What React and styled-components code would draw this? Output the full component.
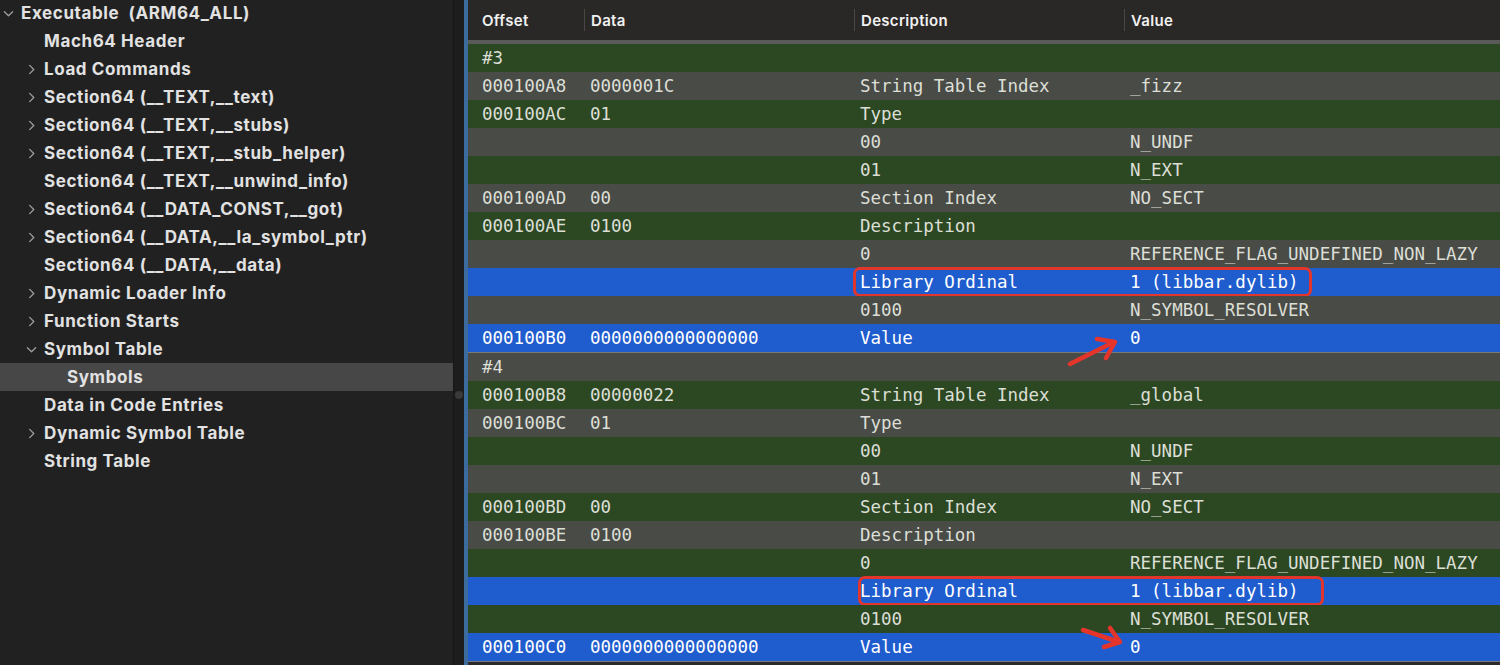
import React from 'react'
import styled, { createGlobalStyle } from 'styled-components'

const GlobalStyle = createGlobalStyle`
  html, body {
    margin: 0;
    padding: 0;
    background: #212121;
    overflow: hidden;
  }
`

const Window = styled.div`
  display: flex;
  width: 1500px;
  height: 665px;
  background: #212121;
  overflow: hidden;
`

const Sidebar = styled.div`
  width: 453px;
  flex-shrink: 0;
  background: #212121;
  border-right: 1px solid #161616;
  margin-top: -1px;
`

const TreeRow = styled.div`
  position: relative;
  display: flex;
  align-items: center;
  height: 28px;
  padding-left: ${props => props.level * 23 + 21}px;
  background: ${props => (props.selected ? '#474747' : 'transparent')};
  color: #e2e2e2;
  font-family: Inter, "Open Sans", sans-serif;
  font-weight: 700;
  font-size: 17px;
  letter-spacing: 0.6px;
  white-space: pre;
`

const Chevron = styled.svg`
  position: absolute;
  left: ${props => props.level * 23 + 3}px;
  top: 9px;
  width: 11px;
  height: 11px;
`

const Splitter = styled.div`
  width: 10px;
  flex-shrink: 0;
  display: flex;
  align-items: center;
  justify-content: center;
  background: #1d1d1d;
  padding-top: 125px;
`

const Knob = styled.div`
  width: 8px;
  height: 8px;
  border-radius: 50%;
  background: #3a3a3a;
`

const Panel = styled.div`
  flex: 1;
  border-left: 4px solid #3c6b9e;
  background: #2b2929;
  display: flex;
  flex-direction: column;
`

const Header = styled.div`
  display: grid;
  grid-template-columns: 116px 270px 270px 1fr;
  height: 40px;
  align-items: center;
  background: #2a2727;
  border-bottom: 4px solid #5a5a5a;
`

const HeadCell = styled.div`
  height: 22px;
  display: flex;
  align-items: center;
  padding-left: ${props => (props.first ? 14 : 6)}px;
  border-left: ${props => (props.first ? 'none' : '1px solid #4a4747')};
  color: #f1f1f1;
  font-family: Inter, "Open Sans", sans-serif;
  font-weight: 600;
  font-size: 15px;
  letter-spacing: 0.3px;
`

const Group = styled.div`
  border-bottom: 1px solid #7a7a7a;
`

const Row = styled.div`
  position: relative;
  display: grid;
  grid-template-columns: 116px 270px 270px 1fr;
  height: 28px;
  align-items: center;
  background: ${props => props.bg};
  color: ${props => (props.selected ? '#ffffff' : '#dcdfd6')};
  font-family: "DejaVu Sans Mono", "Liberation Mono", monospace;
  font-size: 17.5px;
  white-space: pre;
`

const Cell = styled.div`
  padding-left: ${props => (props.first ? 14 : 6)}px;
`

const Callout = styled.div`
  position: absolute;
  left: ${props => props.left}px;
  top: -1px;
  width: ${props => props.width}px;
  height: 30px;
  border: 3px solid #e2362c;
  border-radius: 7px;
  box-sizing: border-box;
  pointer-events: none;
`

const Arrow = styled.svg`
  position: absolute;
  z-index: 2;
  left: 590px;
  top: ${props => props.top}px;
  width: 80px;
  height: 60px;
  overflow: visible;
  pointer-events: none;
`

const GREEN = '#2c4823'
const GRAY = '#494b47'
const BLUE = '#1f5ccd'
const RED = '#e5352b'

const tree = [
  { label: 'Executable  (ARM64_ALL)', level: 0, chevron: 'down' },
  { label: 'Mach64 Header', level: 1 },
  { label: 'Load Commands', level: 1, chevron: 'right' },
  { label: 'Section64 (__TEXT,__text)', level: 1, chevron: 'right' },
  { label: 'Section64 (__TEXT,__stubs)', level: 1, chevron: 'right' },
  { label: 'Section64 (__TEXT,__stub_helper)', level: 1, chevron: 'right' },
  { label: 'Section64 (__TEXT,__unwind_info)', level: 1 },
  { label: 'Section64 (__DATA_CONST,__got)', level: 1, chevron: 'right' },
  { label: 'Section64 (__DATA,__la_symbol_ptr)', level: 1, chevron: 'right' },
  { label: 'Section64 (__DATA,__data)', level: 1 },
  { label: 'Dynamic Loader Info', level: 1, chevron: 'right' },
  { label: 'Function Starts', level: 1, chevron: 'right' },
  { label: 'Symbol Table', level: 1, chevron: 'down' },
  { label: 'Symbols', level: 2, selected: true },
  { label: 'Data in Code Entries', level: 1 },
  { label: 'Dynamic Symbol Table', level: 1, chevron: 'right' },
  { label: 'String Table', level: 1 },
]

const makeGroup = (n, o, idx, name) => [
  { cells: [`#${n}`, '', '', ''] },
  { cells: [o[0], idx, 'String Table Index', name] },
  { cells: [o[1], '01', 'Type', ''] },
  { cells: ['', '', '00', 'N_UNDF'] },
  { cells: ['', '', '01', 'N_EXT'] },
  { cells: [o[2], '00', 'Section Index', 'NO_SECT'] },
  { cells: [o[3], '0100', 'Description', ''] },
  { cells: ['', '', '0', 'REFERENCE_FLAG_UNDEFINED_NON_LAZY'] },
  { cells: ['', '', 'Library Ordinal', '1 (libbar.dylib)'], selected: true, callout: true },
  { cells: ['', '', '0100', 'N_SYMBOL_RESOLVER'] },
  { cells: [o[4], '0000000000000000', 'Value', '0'], selected: true, arrow: true },
]

const groups = [
  {
    start: 0,
    rows: makeGroup(3, ['000100A8', '000100AC', '000100AD', '000100AE', '000100B0'], '0000001C', '_fizz'),
    callout: { left: 385, width: 459 },
    arrow: { top: 0, line: 'M12 40 L56 18', head: 'M39 15 L57 18 L48 34' },
  },
  {
    start: 1,
    rows: makeGroup(4, ['000100B8', '000100BC', '000100BD', '000100BE', '000100C0'], '00000022', '_global'),
    callout: { left: 390, width: 466 },
    arrow: { top: -30, line: 'M25 27 L61 39', head: 'M52 25 L62 39 L46 44' },
  },
]

function ChevronIcon({ dir, level }) {
  return (
    <Chevron level={level} viewBox="0 0 12 12">
      <path
        d={dir === 'down' ? 'M1.5 4 L6 8.5 L10.5 4' : 'M4 1.5 L8.5 6 L4 10.5'}
        fill="none"
        stroke="#9b9b9b"
        strokeWidth="1.5"
        strokeLinecap="round"
        strokeLinejoin="round"
      />
    </Chevron>
  )
}

export default function App() {
  return (
    <Window>
      <GlobalStyle />
      <Sidebar>
        {tree.map(item => (
          <TreeRow key={item.label} level={item.level} selected={item.selected}>
            {item.chevron && <ChevronIcon dir={item.chevron} level={item.level} />}
            {item.label}
          </TreeRow>
        ))}
      </Sidebar>
      <Splitter>
        <Knob />
      </Splitter>
      <Panel>
        <Header>
          <HeadCell first>Offset</HeadCell>
          <HeadCell>Data</HeadCell>
          <HeadCell>Description</HeadCell>
          <HeadCell>Value</HeadCell>
        </Header>
        {groups.map(g => (
          <Group key={g.rows[0].cells[0]}>
            {g.rows.map((r, i) => {
              const bg = r.selected ? BLUE : (i + g.start) % 2 === 0 ? GREEN : GRAY
              return (
                <Row key={i} bg={bg} selected={r.selected}>
                  {r.cells.map((c, j) => (
                    <Cell key={j} first={j === 0}>{c}</Cell>
                  ))}
                  {r.callout && <Callout left={g.callout.left} width={g.callout.width} />}
                  {r.arrow && (
                    <Arrow top={g.arrow.top}>
                      <path d={g.arrow.line} stroke={RED} strokeWidth="4.5" strokeLinecap="round" fill="none" />
                      <path d={g.arrow.head} stroke={RED} strokeWidth="4.5" strokeLinecap="round" strokeLinejoin="round" fill="none" />
                    </Arrow>
                  )}
                </Row>
              )
            })}
          </Group>
        ))}
      </Panel>
    </Window>
  )
}
